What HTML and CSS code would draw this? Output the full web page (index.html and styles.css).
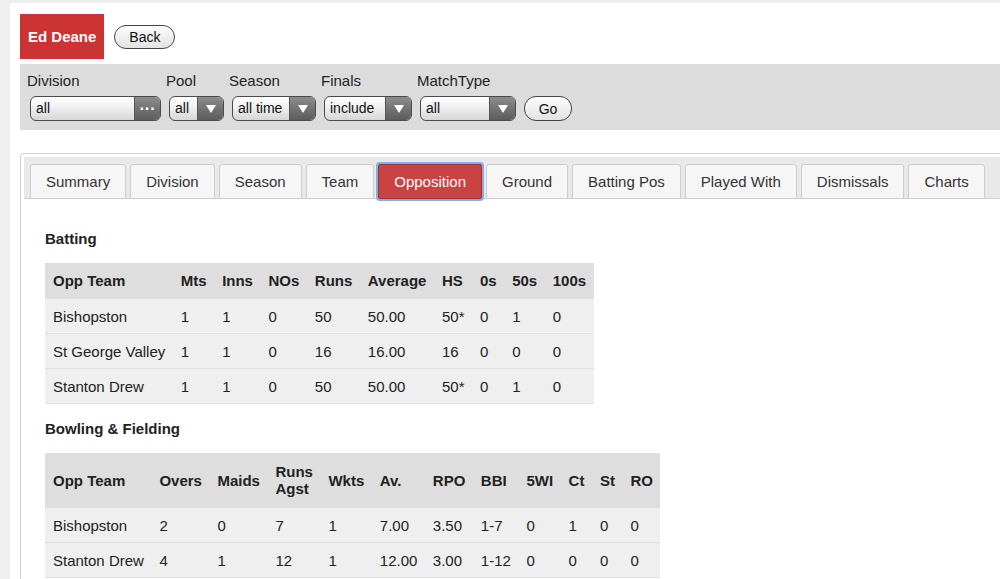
FILE: index.html
```html
<!DOCTYPE html>
<html lang="en">
<head>
  <meta charset="UTF-8">
  <title>Ed Deane - Opposition</title>
  <link rel="stylesheet" href="styles.css">
</head>
<body>
  <div class="page">
    <!-- player heading -->
    <div class="top-row">
      <div class="player-name">Ed Deane</div>
      <button class="pill-btn back-btn">Back</button>
    </div>

    <!-- filters -->
    <div class="filter-bar">
      <div class="field">
        <label>Division</label>
        <div class="fake-select sel-division">
          <span class="sel-text">all</span>
          <span class="sel-btn"><span class="dots">&middot;&middot;&middot;</span></span>
        </div>
      </div>
      <div class="field">
        <label>Pool</label>
        <div class="fake-select sel-pool">
          <span class="sel-text">all</span>
          <span class="sel-btn"><span class="tri"></span></span>
        </div>
      </div>
      <div class="field">
        <label>Season</label>
        <div class="fake-select sel-season">
          <span class="sel-text">all time</span>
          <span class="sel-btn"><span class="tri"></span></span>
        </div>
      </div>
      <div class="field">
        <label>Finals</label>
        <div class="fake-select sel-finals">
          <span class="sel-text">include</span>
          <span class="sel-btn"><span class="tri"></span></span>
        </div>
      </div>
      <div class="field">
        <label>MatchType</label>
        <div class="fake-select sel-type">
          <span class="sel-text">all</span>
          <span class="sel-btn"><span class="tri"></span></span>
        </div>
      </div>
      <button class="pill-btn go-btn">Go</button>
    </div>

    <!-- tabs -->
    <div class="tab-panel">
      <ul class="tab-bar">
        <li class="tab">Summary</li>
        <li class="tab">Division</li>
        <li class="tab">Season</li>
        <li class="tab">Team</li>
        <li class="tab active">Opposition</li>
        <li class="tab">Ground</li>
        <li class="tab">Batting Pos</li>
        <li class="tab">Played With</li>
        <li class="tab">Dismissals</li>
        <li class="tab">Charts</li>
      </ul>

      <div class="tab-content">
        <h4 class="section-title">Batting</h4>
        <table class="stats">
          <thead>
            <tr>
              <th>Opp Team</th><th>Mts</th><th>Inns</th><th>NOs</th><th>Runs</th>
              <th>Average</th><th>HS</th><th>0s</th><th>50s</th><th>100s</th>
            </tr>
          </thead>
          <tbody>
            <tr><td>Bishopston</td><td>1</td><td>1</td><td>0</td><td>50</td><td>50.00</td><td>50*</td><td>0</td><td>1</td><td>0</td></tr>
            <tr><td>St George Valley</td><td>1</td><td>1</td><td>0</td><td>16</td><td>16.00</td><td>16</td><td>0</td><td>0</td><td>0</td></tr>
            <tr><td>Stanton Drew</td><td>1</td><td>1</td><td>0</td><td>50</td><td>50.00</td><td>50*</td><td>0</td><td>1</td><td>0</td></tr>
          </tbody>
        </table>

        <h4 class="section-title second">Bowling &amp; Fielding</h4>
        <table class="stats bowling">
          <thead>
            <tr>
              <th>Opp Team</th><th>Overs</th><th>Maids</th><th>Runs<br>Agst</th><th>Wkts</th>
              <th>Av.</th><th>RPO</th><th>BBI</th><th>5WI</th><th>Ct</th><th>St</th><th>RO</th>
            </tr>
          </thead>
          <tbody>
            <tr><td>Bishopston</td><td>2</td><td>0</td><td>7</td><td>1</td><td>7.00</td><td>3.50</td><td>1-7</td><td>0</td><td>1</td><td>0</td><td>0</td></tr>
            <tr><td>Stanton Drew</td><td>4</td><td>1</td><td>12</td><td>1</td><td>12.00</td><td>3.00</td><td>1-12</td><td>0</td><td>0</td><td>0</td><td>0</td></tr>
          </tbody>
        </table>
      </div>
    </div>
  </div>
</body>
</html>
```
FILE: styles.css
```css
html, body {
  overflow: hidden;
}

body {
  margin: 0;
  background: #efefef;
  font-family: "Liberation Sans", Arial, sans-serif;
  color: #222;
}

.page {
  margin: 3px 0 0 10px;
  padding: 11px 0 40px 10px;
  background: #fff;
}

/* top row */
.top-row {
  display: flex;
  align-items: center;
}

.player-name {
  height: 45px;
  padding: 0 8px;
  display: flex;
  align-items: center;
  background: #cc3333;
  color: #fff;
  font-size: 15px;
  font-weight: bold;
}

.pill-btn {
  height: 24px;
  padding: 0 13px;
  border: 1px solid #444;
  border-radius: 12px;
  background: linear-gradient(#fdfdfd, #e2e2e2);
  font-family: "Liberation Sans", Arial, sans-serif;
  font-size: 14px;
  color: #111;
}

.back-btn {
  margin-left: 10px;
  width: 61px;
}

/* filters */
.filter-bar {
  display: flex;
  align-items: flex-end;
  gap: 5px;
  margin-top: 5px;
  padding: 8px 0 9px 7px;
  background: #dcdcdc;
}

.field {
  display: flex;
  flex-direction: column;
}

.field label {
  font-size: 15px;
  line-height: 18px;
  margin-bottom: 6px;
  color: #222;
}

.fake-select {
  display: flex;
  margin-left: 3px;
  height: 25px;
  box-sizing: border-box;
  border: 1px solid #4a4a4a;
  border-radius: 6px;
  overflow: hidden;
  background: linear-gradient(#ffffff, #f0f0f0 45%, #d6d6d6);
}

.sel-text {
  flex: 1;
  padding-left: 5px;
  font-size: 14px;
  line-height: 23px;
  color: #111;
}

.sel-btn {
  width: 25px;
  display: flex;
  align-items: center;
  justify-content: center;
  background: linear-gradient(#8c8c8c, #5c5c5c);
  border-left: 1px solid #555;
}

.tri {
  width: 0;
  height: 0;
  border-left: 5px solid transparent;
  border-right: 5px solid transparent;
  border-top: 8px solid #fff;
}

.dots {
  color: #fff;
  font-size: 16px;
  font-weight: bold;
}

.sel-division { width: 131px; }
.sel-pool { width: 55px; }
.sel-season { width: 84px; }
.sel-finals { width: 88px; }
.sel-type { width: 96px; }

.go-btn {
  height: 25px;
  width: 48px;
  padding: 0;
  margin-left: 3px;
}

/* tabs */
.tab-panel {
  margin-top: 23px;
  margin-right: -12px;
  border: 1px solid #cfcfcf;
  border-radius: 4px;
  padding: 3px;
}

.tab-bar {
  display: flex;
  gap: 4px;
  margin: 0;
  padding: 7px 0 0 6px;
  list-style: none;
  background: #e9e9e9;
  border-bottom: 1px solid #d2d2d2;
}

.tab {
  height: 35px;
  box-sizing: border-box;
  padding: 0 15px;
  margin-bottom: -1px;
  display: flex;
  align-items: center;
  border: 1px solid #cdcdcd;
  border-radius: 3px 3px 0 0;
  background: #f6f6f6;
  font-size: 15px;
  color: #333;
}

.tab.active {
  background: #c94343;
  border-color: #a83232;
  color: #fff;
  box-shadow: 0 0 0 2px #7fb0ea;
  border-radius: 2px;
}

.tab-content {
  padding: 31px 0 0 21px;
}

.section-title {
  margin: 0 0 15px;
  font-size: 15px;
  line-height: 18px;
  font-weight: bold;
  color: #222;
}

.section-title.second {
  margin-top: 16px;
}

/* stats tables */
.stats {
  border-collapse: collapse;
  font-size: 15px;
  color: #222;
}

.stats th {
  text-align: left;
  padding: 0 7.5px 0 8px;
  height: 35px;
  background: #dedede;
  font-weight: bold;
  line-height: 17px;
}

.stats.bowling th {
  height: 54px;
}

.stats td {
  padding: 0 7.5px 0 8px;
  height: 34px;
  background: #efefef;
  border-top: 1px solid #e0e0e0;
  border-bottom: 1px solid #e0e0e0;
  white-space: nowrap;
}
```
